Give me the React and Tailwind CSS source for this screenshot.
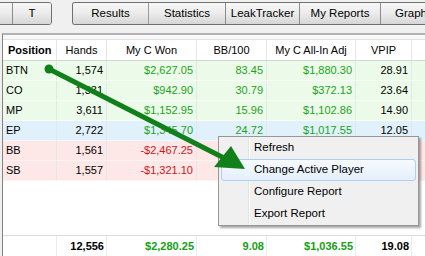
import React from 'react'

const COLS = 'grid grid-cols-[54px_50px_90px_70px_89px_56px_1fr]'

const ROWS = [
  { pos: 'BTN', hands: '1,574', won: '$2,627.05', bb: '83.45', adj: '$1,880.30', vpip: '28.91', tone: 'green' },
  { pos: 'CO', hands: '1,331', won: '$942.90', bb: '30.79', adj: '$372.13', vpip: '23.64', tone: 'green' },
  { pos: 'MP', hands: '3,611', won: '$1,152.95', bb: '15.96', adj: '$1,102.86', vpip: '14.90', tone: 'green' },
  { pos: 'EP', hands: '2,722', won: '$1,345.70', bb: '24.72', adj: '$1,017.55', vpip: '12.05', tone: 'blue' },
  { pos: 'BB', hands: '1,561', won: '-$2,467.25', bb: '', adj: '', vpip: '', tone: 'red' },
  { pos: 'SB', hands: '1,557', won: '-$1,321.10', bb: '', adj: '', vpip: '', tone: 'red' },
]

const ROW_BG = {
  green: 'bg-[#ecfbe9]',
  blue: 'bg-[#e0f1fb]',
  red: 'bg-[#fde7e7]',
}

const MENU = ['Refresh', 'Change Active Player', 'Configure Report', 'Export Report']

function TabButton({ label, className = '' }) {
  return (
    <div
      className={`flex items-center justify-center h-full bg-gradient-to-b from-[#f7f7f7] via-[#ebebeb] to-[#d6d6d6] text-[11.5px] text-black whitespace-nowrap ${className}`}
    >
      {label}
    </div>
  )
}

function Cell({ children, className = '' }) {
  return (
    <div className={`flex items-center h-full border-r border-[#e4e8e4] ${className}`}>{children}</div>
  )
}

export default function App() {
  return (
    <div className="relative w-[425px] h-[256px] overflow-hidden bg-[#f0f0f0] font-['Liberation_Sans',Arial,sans-serif] text-[11px] text-black">
      {/* tab strip */}
      <div className="flex h-[25px] pt-[2px]">
        <div className="flex shrink-0 h-[23px] ml-[-12px] w-[64px] border border-[#707070] rounded-r-[3px] overflow-hidden">
          <TabButton label="" className="w-[24px] border-r border-[#8c8c8c]" />
          <TabButton label="T" className="flex-1" />
        </div>
        <div className="flex shrink-0 h-[23px] ml-[20px] w-[400px] border border-[#707070] border-r-0 rounded-l-[3px] overflow-hidden">
          <TabButton label="Results" className="w-[76px] border-r border-[#9a9a9a]" />
          <TabButton label="Statistics" className="w-[77px] border-r border-[#8c8c8c]" />
          <TabButton label="LeakTracker" className="w-[74px] border-r border-[#8c8c8c]" />
          <TabButton label="My Reports" className="w-[81px] border-r border-[#8c8c8c]" />
          <TabButton label="Graphs" className="flex-1 justify-start pl-[14px]" />
        </div>
      </div>
      <div className="h-[8px]" />

      {/* report panel */}
      <div className="border-t-2 border-[#b3b3b3] ml-[2px] border-l border-l-[#838383] bg-white h-[223px] flex flex-col">
        <div className="h-[5px] bg-[#f8f8f8] border-b border-[#e2e2e2]" />
        <div className={`${COLS} h-[21px] border-b border-[#d5d5d5] bg-white`}>
          <Cell className="pl-[5px] font-bold border-[#d6d6d6]">Position</Cell>
          <Cell className="justify-center border-[#d6d6d6]">Hands</Cell>
          <Cell className="justify-center border-[#d6d6d6]">My C Won</Cell>
          <Cell className="justify-center border-[#d6d6d6]">BB/100</Cell>
          <Cell className="justify-center border-[#d6d6d6]">My C All-In Adj</Cell>
          <Cell className="justify-center border-[#d6d6d6]">VPIP</Cell>
          <div />
        </div>
        {ROWS.map((r) => {
          const money = r.tone === 'red' ? 'text-[#c81818]' : 'text-[#1ca21c]'
          return (
            <div key={r.pos} className={`${COLS} h-[20px] ${ROW_BG[r.tone]} border-b border-white/50`}>
              <Cell className="pl-[3px]">{r.pos}</Cell>
              <Cell className="justify-end pr-[3px]">{r.hands}</Cell>
              <Cell className={`justify-end pr-[3px] ${money}`}>{r.won}</Cell>
              <Cell className={`justify-end pr-[3px] ${money}`}>{r.bb}</Cell>
              <Cell className={`justify-end pr-[3px] ${money}`}>{r.adj}</Cell>
              <Cell className="justify-end pr-[3px]">{r.vpip}</Cell>
              <div />
            </div>
          )
        })}
        <div className="flex-1" />
        <div className={`${COLS} h-[21px] border-t border-[#dcdcdc] font-bold`}>
          <Cell className="border-[#ececec]" />
          <Cell className="justify-end pr-[2px] border-[#ececec]">12,556</Cell>
          <Cell className="justify-end pr-[2px] text-[#14a014] border-[#ececec]">$2,280.25</Cell>
          <Cell className="justify-end pr-[2px] text-[#14a014] border-[#ececec]">9.08</Cell>
          <Cell className="justify-end pr-[2px] text-[#14a014] border-[#ececec]">$1,036.55</Cell>
          <Cell className="justify-end pr-[2px] border-[#ececec]">19.08</Cell>
          <div />
        </div>
      </div>

      {/* context menu */}
      <div className="absolute left-[218px] top-[136px] w-[201px] h-[90px] bg-[#f0f0f0] border border-[#979797] shadow-[2px_2px_2px_rgba(0,0,0,0.35)] text-[11.5px]">
        <div className="absolute left-[29px] top-0 bottom-0 w-[2px] border-l border-[#e2e3e3] border-r border-r-white" />
        {MENU.map((item, i) => (
          <div
            key={item}
            className={`relative h-[22px] mx-[2px] flex items-center pl-[32px] rounded-[3px] border ${
              i === 1
                ? 'border-[#aecff0] bg-gradient-to-b from-[#f5fafe] to-[#e4effb]'
                : 'border-transparent'
            }`}
          >
            {item}
          </div>
        ))}
      </div>

      {/* annotation arrow */}
      <svg className="absolute inset-0 pointer-events-none" width="425" height="256" viewBox="0 0 425 256">
        <line x1="49" y1="69" x2="224" y2="158" stroke="#12801a" strokeWidth="5" />
        <circle cx="49" cy="69" r="4.5" fill="#12801a" />
        <polygon points="231,146 245,169 214,167" fill="#12801a" />
      </svg>
    </div>
  )
}
